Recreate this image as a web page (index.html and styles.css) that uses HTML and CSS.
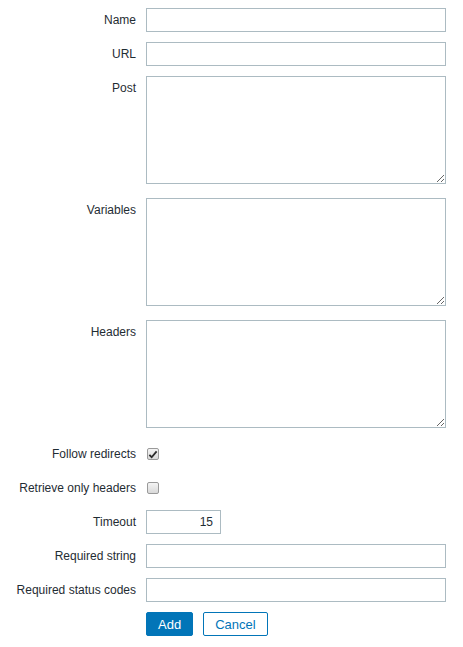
FILE: index.html
```html
<!DOCTYPE html>
<html>
<head>
    <meta charset="utf-8">
    <meta name="viewport" content="width=device-width, initial-scale=1">
    <title>Step</title>
    <link rel="stylesheet" href="styles.css">
</head>

<body>
    <form class="step-form" id="stepForm">
        <label for="name">Name</label>
        <input type="text" id="name" name="name">

        <label for="url">URL</label>
        <input type="text" id="url" name="url">

        <label for="post">Post</label>
        <textarea id="post" name="post"></textarea>

        <label for="variables">Variables</label>
        <textarea id="variables" name="variables"></textarea>

        <label for="headers">Headers</label>
        <textarea id="headers" name="headers"></textarea>

        <label for="followRedirects">Follow redirects</label>
        <div class="check-cell">
            <span class="checkbox checked" id="followRedirects">
                <svg width="11" height="11" viewBox="0 0 11 11"><path d="M1.5 6 L4 8.5 L9.5 2" fill="none" stroke="#2b2b2b" stroke-width="2"/></svg>
            </span>
        </div>

        <label for="retrieveHeaders">Retrieve only headers</label>
        <div class="check-cell">
            <span class="checkbox" id="retrieveHeaders"></span>
        </div>

        <label for="timeout">Timeout</label>
        <div>
            <input type="text" id="timeout" name="timeout" class="timeout" value="15">
        </div>

        <label for="requiredString">Required string</label>
        <input type="text" id="requiredString" name="requiredString">

        <label for="statusCodes">Required status codes</label>
        <input type="text" id="statusCodes" name="statusCodes">

        <span></span>
        <div class="buttons">
            <button type="button" class="btn-add">Add</button>
            <button type="button" class="btn-cancel">Cancel</button>
        </div>
    </form>
</body>
</html>
```

FILE: styles.css
```css
/* Web scenario step form */
body {
    margin: 0;
    padding: 0;
    background-color: #fff;
    font-family: "Liberation Sans", Arial, sans-serif;
    font-size: 12px;
    color: #1f2c33;
}
.step-form {
    display: grid;
    grid-template-columns: 136px 300px;
    column-gap: 10px;
    row-gap: 10px;
    padding-top: 8px;
    align-items: start;
}
.step-form label {
    text-align: right;
    line-height: 24px;
    white-space: nowrap;
}
.step-form input[type="text"],
.step-form textarea {
    box-sizing: border-box;
    width: 300px;
    height: 24px;
    margin: 0;
    padding: 0 6px;
    border: 1px solid #acbbc2;
    border-radius: 0;
    font-family: inherit;
    font-size: 12px;
    color: #1f2c33;
    background-color: #fff;
    outline: none;
}
.step-form textarea {
    height: 108px;
    margin-bottom: 4px;
    padding: 4px 6px;
    resize: vertical;
}
.step-form input.timeout {
    width: 75px;
    text-align: right;
    padding-right: 7px;
}
.check-cell {
    height: 24px;
    display: flex;
    align-items: center;
    padding-left: 1px;
}
.checkbox {
    box-sizing: border-box;
    width: 12px;
    height: 12px;
    border: 1px solid #9a9a9a;
    border-radius: 2px;
    background: linear-gradient(#f4f4f4, #d9d9d9);
    display: flex;
    align-items: center;
    justify-content: center;
}
.checkbox svg {
    display: block;
}
.buttons {
    display: flex;
    gap: 10px;
}
.buttons button {
    height: 24px;
    padding: 0 11px;
    border: 1px solid #0275b8;
    border-radius: 2px;
    font-family: inherit;
    font-size: 13px;
    cursor: pointer;
}
.btn-add {
    background-color: #0275b8;
    color: #fff;
}
.btn-cancel {
    background-color: #fff;
    color: #0275b8;
}
```
